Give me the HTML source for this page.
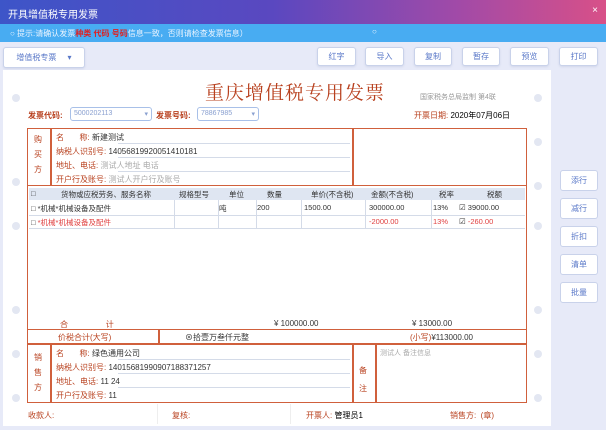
<!DOCTYPE html>
<html><head><meta charset="utf-8"><style>
*{margin:0;padding:0;box-sizing:border-box}
body{width:606px;height:430px;overflow:hidden;background:#e7eaf8;font-family:"Liberation Sans","Noto Sans CJK SC",sans-serif;font-size:9px;position:relative}
.a{position:absolute}
.tb{left:0;top:0;width:606px;height:24px;background:linear-gradient(90deg,#3d55c8 0%,#5a48c0 45%,#a04aa8 75%,#d85088 100%);color:#fff;font-size:10px;padding:6px 8px}
.ib{left:0;top:24px;width:606px;height:18px;background:#48acf2;color:#eaf4ff;font-size:8px;padding:4px 10px}
.btn{height:19px;top:47px;border:1px solid #c9d2ea;border-radius:3px;background:#fff;color:#5a78c8;font-size:8px;text-align:center;line-height:17px;box-shadow:0 1px 2px #d0d6ea}
.paper{left:3px;top:70px;width:548px;height:356px;background:#fff}
.r{color:#b8401e}
.box{border:1.5px solid #d0603c}
.ln{background:#d0603c}
.gl{background:#d4dbe8;height:1px}
.hole{width:8px;height:8px;border-radius:50%;background:#e3e7f2}
.rb{left:560px;width:38px;height:21px;border:1px solid #c9d2ea;border-radius:3px;background:#fff;color:#5a78c8;font-size:8px;text-align:center;line-height:19px}
.in{border:1px solid #a8c0e8;border-radius:3px;height:14px;background:#fff;color:#8aa0d0;font-size:7px;padding:2px 3px}
.t{font-size:8px;color:#333}
</style></head><body>
<div class="a tb">开具增值税专用发票<span style="position:absolute;right:8px;top:5px">×</span></div>
<div class="a ib">○ 提示:请确认发票<b style="color:#e02020">种类</b> <b style="color:#e02020">代码</b> <b style="color:#e02020">号码</b>信息一致，否则请检查发票信息）<span style="position:absolute;left:372px;top:3px">○</span></div>
<div class="a btn" style="left:3px;width:82px;top:47px;height:21px;line-height:19px">增值税专票 &nbsp;&nbsp;&nbsp;&nbsp;▾</div>
<div class="a btn" style="left:317px;width:39px">红字</div>
<div class="a btn" style="left:365px;width:39px">导入</div>
<div class="a btn" style="left:414px;width:38px">复制</div>
<div class="a btn" style="left:462px;width:38px">暂存</div>
<div class="a btn" style="left:510px;width:39px">预览</div>
<div class="a btn" style="left:559px;width:39px">打印</div>
<div class="a paper"></div>
<div class="a hole" style="left:12px;top:94px"></div><div class="a hole" style="left:12px;top:178px"></div><div class="a hole" style="left:12px;top:222px"></div><div class="a hole" style="left:12px;top:306px"></div><div class="a hole" style="left:12px;top:350px"></div><div class="a hole" style="left:12px;top:394px"></div>
<div class="a hole" style="left:534px;top:94px"></div><div class="a hole" style="left:534px;top:138px"></div><div class="a hole" style="left:534px;top:182px"></div><div class="a hole" style="left:534px;top:222px"></div><div class="a hole" style="left:534px;top:306px"></div><div class="a hole" style="left:534px;top:350px"></div><div class="a hole" style="left:534px;top:394px"></div>
<div class="a r" style="left:205px;top:78px;font-size:19px;font-family:'Noto Serif CJK SC',serif;letter-spacing:1px">重庆增值税专用发票</div>
<div class="a" style="left:420px;top:92px;font-size:7px;color:#999">国家税务总局监制 第4联</div>
<div class="a r" style="left:28px;top:110px;font-size:8px;font-weight:bold">发票代码:</div>
<div class="a in" style="left:70px;top:107px;width:82px">5000202113 <span style="float:right">▾</span></div>
<div class="a r" style="left:156px;top:110px;font-size:8px;font-weight:bold">发票号码:</div>
<div class="a in" style="left:197px;top:107px;width:62px">78867985 <span style="float:right">▾</span></div>
<div class="a" style="left:414px;top:110px;font-size:8px"><span class="r">开票日期:</span> 2020年07月06日</div>
<!-- buyer -->
<div class="a box" style="left:27px;top:128px;width:500px;height:58px"></div>
<div class="a ln" style="left:50px;top:128px;width:1.5px;height:58px"></div>
<div class="a ln" style="left:352px;top:128px;width:1.5px;height:58px"></div>
<div class="a r" style="left:34px;top:132px;width:10px;line-height:15px;font-size:8px">购<br>买<br>方</div>
<div class="a gl" style="left:118px;top:143px;width:232px"></div><div class="a gl" style="left:118px;top:157px;width:232px"></div><div class="a gl" style="left:118px;top:171px;width:232px"></div>
<div class="a t" style="left:56px;top:131px;line-height:14px"><span class="r">名 &nbsp;&nbsp;&nbsp;&nbsp;&nbsp;&nbsp;称:</span> 新建测试<br><span class="r">纳税人识别号:</span> 14056819920051410181<br><span class="r">地址、电话:</span> <span style="color:#aaa">测试人地址 电话</span><br><span class="r">开户行及账号:</span> <span style="color:#aaa">测试人开户行及账号</span></div>
<!-- items -->
<div class="a box" style="left:27px;top:185px;width:500px;height:145px"></div>
<div class="a" style="left:29px;top:188px;width:496px;height:12px;background:#dfe6f2"></div>
<div class="a t" style="left:29px;top:189px;width:496px;font-size:7.5px">
<span class="a" style="left:2px">□</span><span class="a" style="left:32px">货物或应税劳务、服务名称</span><span class="a" style="left:150px">规格型号</span><span class="a" style="left:200px">单位</span><span class="a" style="left:238px">数量</span><span class="a" style="left:282px">单价(不含税)</span><span class="a" style="left:342px">金额(不含税)</span><span class="a" style="left:410px">税率</span><span class="a" style="left:458px">税额</span></div>
<div class="a gl" style="left:29px;top:215px;width:496px"></div><div class="a gl" style="left:29px;top:228px;width:496px"></div>
<div class="a" style="left:174px;top:200px;width:1px;height:28px;background:#d4dbe8"></div><div class="a" style="left:218px;top:200px;width:1px;height:28px;background:#d4dbe8"></div><div class="a" style="left:256px;top:200px;width:1px;height:28px;background:#d4dbe8"></div><div class="a" style="left:301px;top:200px;width:1px;height:28px;background:#d4dbe8"></div><div class="a" style="left:365px;top:200px;width:1px;height:28px;background:#d4dbe8"></div><div class="a" style="left:431px;top:200px;width:1px;height:28px;background:#d4dbe8"></div>
<div class="a t" style="left:29px;top:203px;width:496px;font-size:7.5px"><span class="a" style="left:2px">□ *机械*机械设备及配件</span><span class="a" style="left:190px">吨</span><span class="a" style="left:228px">200</span><span class="a" style="left:275px">1500.00</span><span class="a" style="left:340px">300000.00</span><span class="a" style="left:404px">13%</span><span class="a" style="left:430px">☑ 39000.00</span></div>
<div class="a t" style="left:29px;top:217px;width:496px;font-size:7.5px;color:#e04040"><span class="a" style="left:2px"><span style="color:#333">□</span> *机械*机械设备及配件</span><span class="a" style="left:340px">-2000.00</span><span class="a" style="left:404px">13%</span><span class="a" style="left:430px"><span style="color:#333">☑</span> -260.00</span></div>
<div class="a r" style="left:60px;top:319px;font-size:8px">合 &nbsp;&nbsp;&nbsp;&nbsp;&nbsp;&nbsp;&nbsp;&nbsp;&nbsp;&nbsp;&nbsp;&nbsp;&nbsp;&nbsp;&nbsp;&nbsp;计</div>
<div class="a t" style="left:274px;top:319px">¥ 100000.00</div><div class="a t" style="left:412px;top:319px">¥ 13000.00</div>
<!-- price tax -->
<div class="a box" style="left:27px;top:329px;width:500px;height:15px"></div>
<div class="a ln" style="left:158px;top:329px;width:1.5px;height:15px"></div>
<div class="a r" style="left:58px;top:332px;font-size:8px">价税合计(大写)</div>
<div class="a t" style="left:185px;top:332px">⊗拾壹万叁仟元整</div>
<div class="a t" style="left:410px;top:332px"><span class="r">(小写)</span>¥113000.00</div>
<!-- seller -->
<div class="a box" style="left:27px;top:344px;width:500px;height:59px"></div>
<div class="a ln" style="left:50px;top:344px;width:1.5px;height:59px"></div>
<div class="a ln" style="left:352px;top:344px;width:1.5px;height:59px"></div>
<div class="a ln" style="left:375px;top:344px;width:1.5px;height:59px"></div>
<div class="a r" style="left:34px;top:350px;width:10px;line-height:15px;font-size:8px">销<br>售<br>方</div>
<div class="a r" style="left:359px;top:362px;width:10px;line-height:18px;font-size:8px">备<br>注</div>
<div class="a" style="left:380px;top:348px;font-size:7px;color:#aaa">测试人 备注信息</div>
<div class="a gl" style="left:118px;top:359px;width:232px"></div><div class="a gl" style="left:118px;top:373px;width:232px"></div><div class="a gl" style="left:118px;top:387px;width:232px"></div>
<div class="a t" style="left:56px;top:347px;line-height:14px"><span class="r">名 &nbsp;&nbsp;&nbsp;&nbsp;&nbsp;&nbsp;称:</span> 绿色通用公司<br><span class="r">纳税人识别号:</span> 14015681990907188371257<br><span class="r">地址、电话:</span> 11 24<br><span class="r">开户行及账号:</span> 11</div>
<div class="a" style="left:157px;top:404px;width:1px;height:20px;background:#eee"></div><div class="a" style="left:290px;top:404px;width:1px;height:20px;background:#eee"></div>
<div class="a r" style="left:28px;top:410px;font-size:8px">收款人:</div>
<div class="a r" style="left:172px;top:410px;font-size:8px">复核:</div>
<div class="a" style="left:306px;top:410px;font-size:8px"><span class="r">开票人:</span> 管理员1</div>
<div class="a r" style="left:450px;top:410px;font-size:8px">销售方: &nbsp;(章)</div>
<div class="a rb" style="top:170px">添行</div>
<div class="a rb" style="top:198px">减行</div>
<div class="a rb" style="top:226px">折扣</div>
<div class="a rb" style="top:254px">清单</div>
<div class="a rb" style="top:282px">批量</div>
</body></html>
